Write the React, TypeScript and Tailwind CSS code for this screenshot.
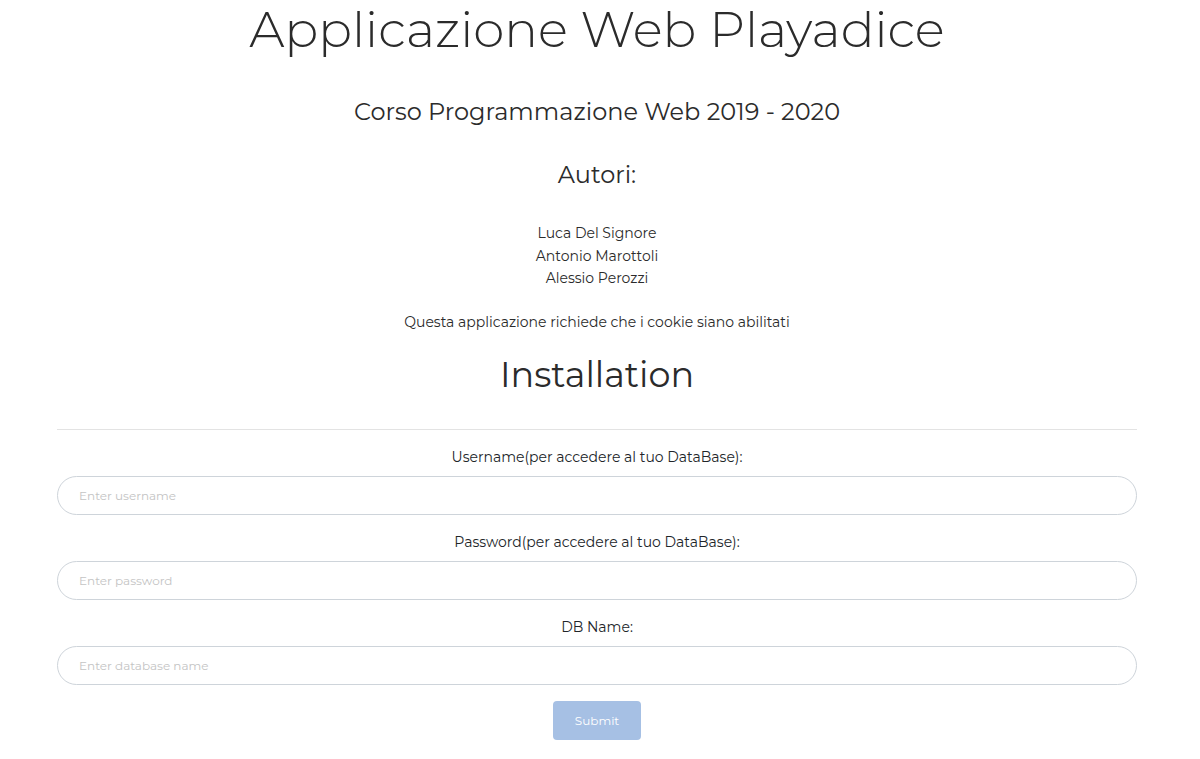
import React from "react";

const font = { fontFamily: "Montserrat, 'Open Sans', 'Noto Sans', sans-serif" };

function Field({ label, placeholder }: { label: string; placeholder: string }) {
  return (
    <div className="flex flex-col">
      <label className="mt-[16px] h-[22px] text-[14px] leading-[22px] text-[#212529]">{label}</label>
      <input
        className="mt-[8px] h-[39px] w-full rounded-full border border-[#ced4da] bg-white pl-[21px] text-[12px] text-[#495057] outline-none placeholder:text-[#c4c4c4]"
        placeholder={placeholder}
        style={font}
      />
    </div>
  );
}

export default function App() {
  return (
    <div className="min-h-[759px] bg-white pl-[57px] pr-[63px] text-center text-[#2b2b2b]" style={font}>
      <h1 className="h-[60px] text-[50px] font-light leading-[60px]">Applicazione Web Playadice</h1>
      <h4 className="mt-[38px] h-[28px] text-[24px] leading-[28px]">Corso Programmazione Web 2019 - 2020</h4>
      <h4 className="mt-[35px] h-[28px] text-[24px] leading-[28px]">Autori:</h4>
      <div className="mt-[33px] text-[14px] leading-[22.5px]">
        <p>Luca Del Signore</p>
        <p>Antonio Marottoli</p>
        <p>Alessio Perozzi</p>
      </div>
      <p className="mt-[21.5px] text-[14px] leading-[22.5px]">Questa applicazione richiede che i cookie siano abilitati</p>
      <h1 className="mt-[18.5px] h-[46px] text-[35px] leading-[46px]">Installation</h1>
      <hr className="mt-[31px] border-t border-[#e3e3e3]" />
      <form className="flex flex-col">
        <Field label="Username(per accedere al tuo DataBase):" placeholder="Enter username" />
        <Field label="Password(per accedere al tuo DataBase):" placeholder="Enter password" />
        <Field label="DB Name:" placeholder="Enter database name" />
        <div className="mt-[16px] flex justify-center">
          <button
            type="button"
            className="h-[39px] w-[88px] rounded-[4px] bg-[#a6c0e4] text-[12px] text-white"
            style={font}
          >
            Submit
          </button>
        </div>
      </form>
    </div>
  );
}
